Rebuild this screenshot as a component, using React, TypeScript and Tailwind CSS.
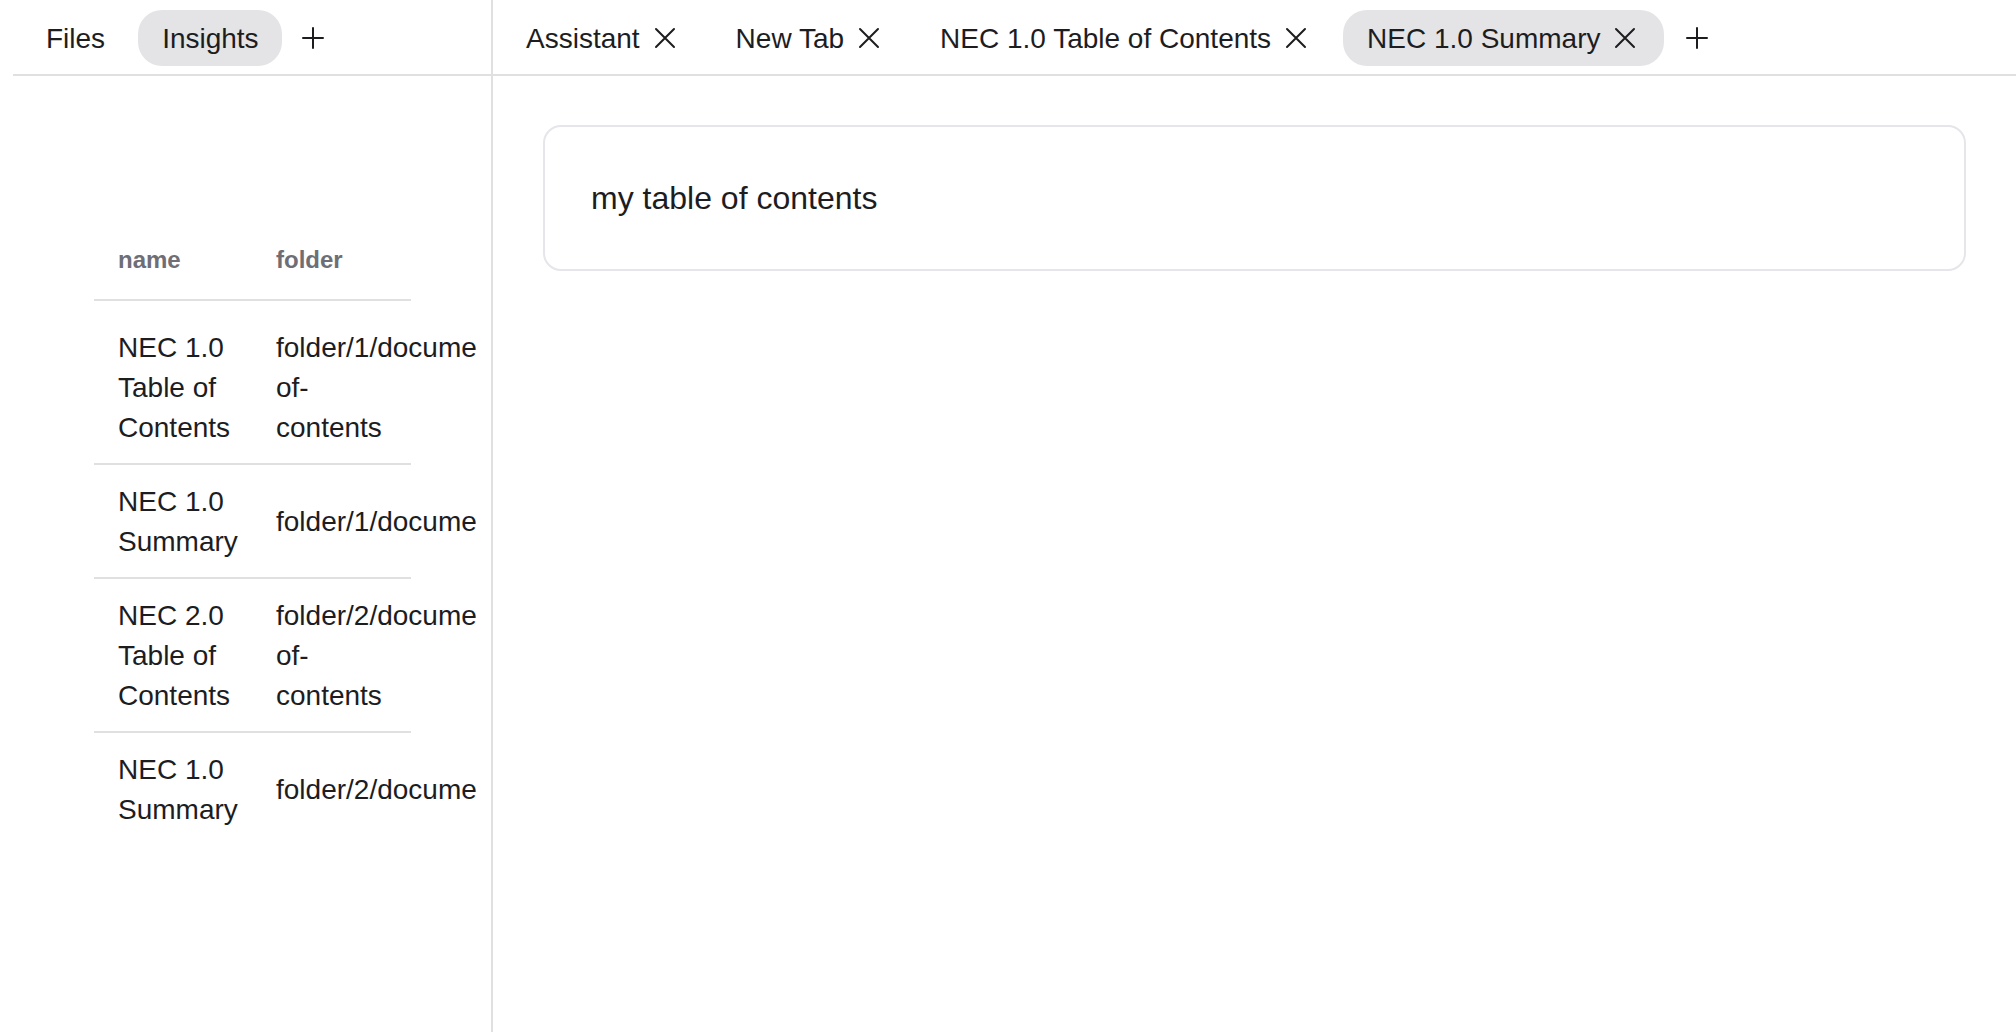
const rows = [
  { name: "NEC 1.0 Table of Contents", folder: "folder/1/document_table-of-contents" },
  { name: "NEC 1.0 Summary", folder: "folder/1/document_summary" },
  { name: "NEC 2.0 Table of Contents", folder: "folder/2/document_table-of-contents" },
  { name: "NEC 1.0 Summary", folder: "folder/2/document_summary" },
];

function CloseIcon() {
  return (
    <svg className="block size-[22px] shrink-0" viewBox="0 0 22 22" fill="none" stroke="currentColor" strokeWidth={2} strokeLinecap="round">
      <path d="M2 2 20 20M20 2 2 20" />
    </svg>
  );
}

function PlusButton() {
  return (
    <div className="flex h-[56px] items-center px-[10px]">
      <svg className="block size-[22px]" viewBox="0 0 22 22" fill="none" stroke="currentColor" strokeWidth={2} strokeLinecap="round">
        <path d="M11 1v20M1 11h20" />
      </svg>
    </div>
  );
}

function Tab({ label, active = false, closable = false }: { label: string; active?: boolean; closable?: boolean }) {
  const pad = !closable ? "pr-[23px]" : active ? "pr-[28px]" : "pr-[24px]";
  return (
    <div className={`flex h-[56px] shrink-0 items-center gap-[14px] rounded-[24px] pl-[24px] ${active ? "bg-[#e4e4e7]" : ""} ${pad}`}>
      <span className="relative top-[1px] whitespace-nowrap text-[28px] leading-[40px]">{label}</span>
      {closable && <CloseIcon />}
    </div>
  );
}

function DocTable() {
  return (
    <div className="mt-[148px] w-[477px] overflow-hidden pl-[94px]">
      <table className="w-[317px] table-fixed border-collapse text-left">
        <colgroup>
          <col className="w-[158px]" />
          <col className="w-[159px]" />
        </colgroup>
        <thead>
          <tr className="border-b-2 border-[#e0e0e0]">
            <th className="pb-[21px] pl-[24px] pr-[8px] pt-[18px] text-[24px] font-bold leading-[36px] text-[#6e6e76]">name</th>
            <th className="pb-[21px] pl-[24px] pr-0 pt-[18px] text-[24px] font-bold leading-[36px] text-[#6e6e76]">folder</th>
          </tr>
        </thead>
        <tbody>
          {rows.map((row, i) => (
            <tr key={i} className={i < rows.length - 1 ? "border-b-2 border-[#e0e0e0]" : ""}>
              <td className={`pb-[15px] pl-[24px] pr-[8px] align-middle text-[28px] leading-[40px] ${i === 0 ? "pt-[27px]" : "pt-[17px]"}`}>
                {row.name}
              </td>
              <td className={`pb-[15px] pl-[24px] pr-0 align-middle text-[28px] leading-[40px] ${i === 0 ? "pt-[27px]" : "pt-[17px]"}`}>
                {row.folder}
              </td>
            </tr>
          ))}
        </tbody>
      </table>
    </div>
  );
}

export default function App() {
  return (
    <div className="flex h-screen w-full overflow-hidden bg-white font-['Liberation_Sans',Arial,sans-serif] text-[#1d1d1f]">
      <aside className="flex w-[493px] shrink-0 flex-col border-r-2 border-[#e0e0e0]">
        <div className="ml-[13px] flex h-[76px] items-start gap-[10px] border-b-2 border-[#e0e0e0] pl-[9px] pt-[10px]">
          <Tab label="Files" />
          <Tab label="Insights" active />
          <PlusButton />
        </div>
        <DocTable />
      </aside>
      <main className="flex min-w-0 flex-1 flex-col">
        <div className="flex h-[76px] items-start gap-[12px] border-b-2 border-[#e0e0e0] pl-[9px] pt-[10px]">
          <Tab label="Assistant" closable />
          <Tab label="New Tab" closable />
          <Tab label="NEC 1.0 Table of Contents" closable />
          <Tab label="NEC 1.0 Summary" active closable />
          <PlusButton />
        </div>
        <div className="px-[50px] pt-[49px]">
          <div className="rounded-[18px] border-2 border-[#e5e5ea] px-[46px] py-[47px] text-[32px] leading-[48px]">
            my table of contents
          </div>
        </div>
      </main>
    </div>
  );
}
